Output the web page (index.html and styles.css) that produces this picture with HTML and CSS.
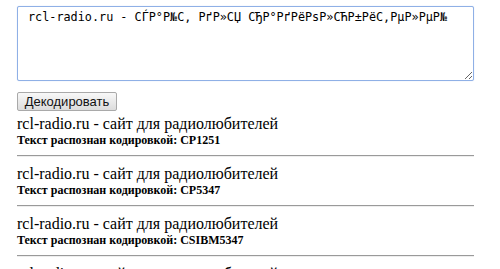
FILE: index.html
```html
<!DOCTYPE html>
<html lang="ru">
<head>
<meta charset="utf-8">
<title>Декодер</title>
<link rel="stylesheet" href="styles.css">
</head>
<body>
<div class="page">
  <form class="decoder">
    <textarea class="source" spellcheck="false">rcl-radio.ru - СЃР°Р№С‚ РґР»СЏ СЂР°РґРёРѕР»СЋР±РёС‚РµР»РµР№</textarea>
    <button type="button" class="btn">Декодировать</button>
  </form>
  <div class="results">
    <div class="result">
      <div class="decoded">rcl-radio.ru - сайт для радиолюбителей</div>
      <div class="enc">Текст распознан кодировкой: CP1251</div>
      <hr class="sep">
    </div>
    <div class="result">
      <div class="decoded">rcl-radio.ru - сайт для радиолюбителей</div>
      <div class="enc">Текст распознан кодировкой: CP5347</div>
      <hr class="sep">
    </div>
    <div class="result">
      <div class="decoded">rcl-radio.ru - сайт для радиолюбителей</div>
      <div class="enc">Текст распознан кодировкой: CSIBM5347</div>
      <hr class="sep">
    </div>
    <div class="result">
      <div class="decoded">rcl-radio.ru - сайт для радиолюбителей</div>
      <div class="enc">Текст распознан кодировкой: CP1251</div>
      <hr class="sep">
    </div>
  </div>
</div>
</body>
</html>
```
FILE: styles.css
```css
html, body {
  margin: 0;
  padding: 0;
  background: #fff;
  overflow: hidden;
}
body {
  font-family: "Liberation Serif", serif;
  color: #000;
}
.page {
  padding: 6px 26px 0 17px;
}
.decoder {
  display: flex;
  flex-direction: column;
  align-items: flex-start;
  gap: 11px;
}
.source {
  box-sizing: border-box;
  width: 457px;
  height: 75px;
  margin: 0;
  padding: 3px 10px;
  border: 1px solid #8fb0e6;
  border-radius: 2px;
  box-shadow: 0 0 1px #b9cdf0;
  font-family: "DejaVu Sans Mono", monospace;
  font-size: 11.8px;
  line-height: 14px;
  color: #000;
  outline: none;
  resize: both;
}
.btn {
  box-sizing: border-box;
  width: 100px;
  height: 19px;
  margin: 0;
  padding: 0;
  border: 1px solid #a9a9a9;
  border-radius: 2px;
  background: linear-gradient(#f8f8f8, #dcdcdc);
  font-family: "Liberation Sans", Arial, sans-serif;
  font-size: 13px;
  color: #111;
}
.results {
  margin-top: 4px;
}
.decoded {
  font-size: 16px;
  line-height: 18px;
}
.enc {
  font-size: 12px;
  line-height: 14px;
  font-weight: bold;
}
.sep {
  margin: 8px 0;
  border: 0;
  border-top: 1px solid #9a9a9a;
  border-bottom: 1px solid #eee;
  height: 0;
}
```
